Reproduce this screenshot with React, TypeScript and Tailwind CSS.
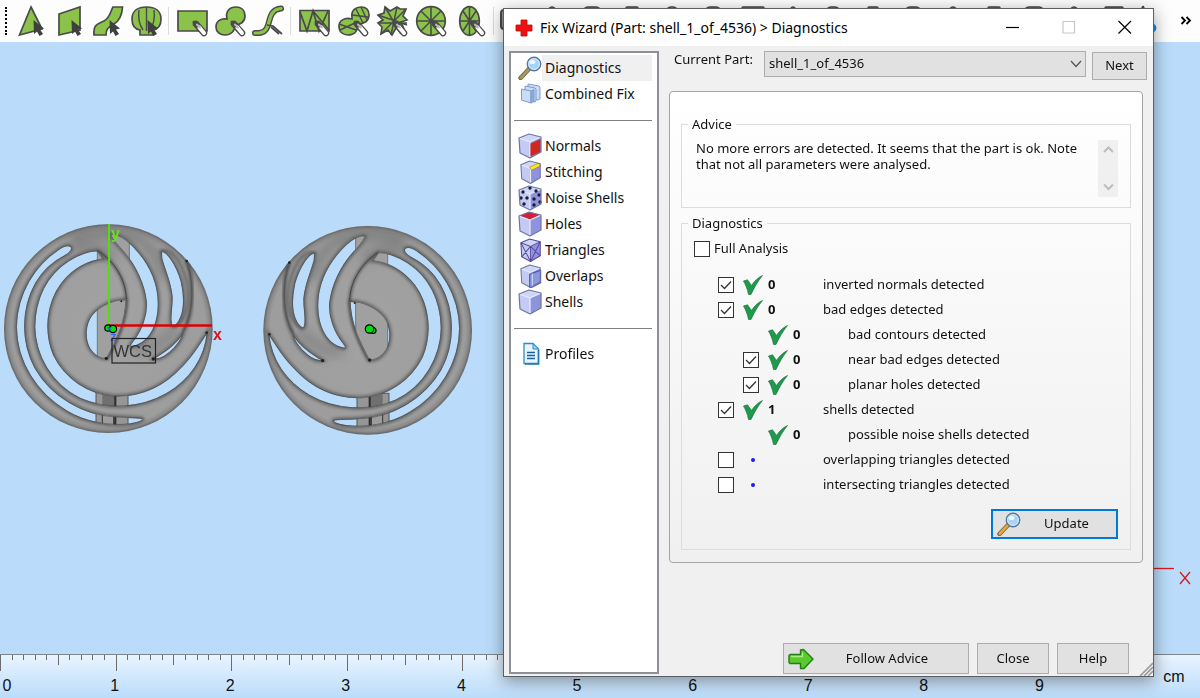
import { useState } from "react";
import type { ReactNode } from "react";

const GREEN = "#8bc34a";
const INK = "#4a4a4a";

/* ---------- toolbar ---------- */

function Cursor() {
  return (
    <path
      d="M20.500 20 L31 28.500 L27 29.500 L30 34 L26.500 36 L24 31.500 L21 34 Z"
      fill="#3f3f3f"
      stroke="none"
    />
  );
}

function Brush() {
  return (
    <g strokeLinecap="round">
      <path d="M23 24 L31 33" stroke={INK} strokeWidth="6.500" />
      <path d="M26 27 L31 33" stroke="#fff" strokeWidth="4" />
      <path d="M21 22 L25 26" stroke={INK} strokeWidth="3" />
      <path d="M24 24.500 L27 27.500" stroke="#bbb" strokeWidth="2" />
    </g>
  );
}

const toolGroups: { name: string; art: ReactNode }[][] = [
  [
    {
      name: "Mark triangle",
      art: (
        <>
          <path d="M18 7 L29 29 L6.500 35 Z" />
          <Cursor />
        </>
      ),
    },
    {
      name: "Mark plane",
      art: (
        <>
          <path d="M8 14 L29 7 V30 L8 35 Z" />
          <Cursor />
        </>
      ),
    },
    {
      name: "Mark surface",
      art: (
        <>
          <path d="M5 35 C4 24 9 24 15 21 C21 18 22 10 24 7 H33.500 C33 16 30 21 25 24 C18 28 17 30 17 35 Z" />
          <Cursor />
        </>
      ),
    },
    {
      name: "Mark shell",
      art: (
        <>
          <path d="M13 35 V30 C7 29 5 24 5 19 C5 11 11 7 19.500 7 C28 7 34 11 34 19 C34 24 32 29 26 30 V35 Z" />
          <path d="M19.500 7 V31 M12 10 C11 17 12 24 16 30 M27 10 C28 17 27 24 23 30" fill="none" strokeWidth="1.400" />
          <Cursor />
        </>
      ),
    },
  ],
  [
    {
      name: "Rectangle brush",
      art: (
        <>
          <path d="M5 11 H34 V31 H5 Z" />
          <Brush />
        </>
      ),
    },
    {
      name: "Blob brush",
      art: (
        <>
          <path d="M16 19 C14 11 19 7 25 7 C31 7 34 11 34 16 C34 22 29 25 24 25 C24 31 20 35 14 35 C9 35 5 32 5 27 C5 21 10 18 16 19 Z" />
          <Brush />
        </>
      ),
    },
    {
      name: "Curve brush",
      art: (
        <>
          <path d="M6 33 H10 C25 32 15 10 32 8.500" fill="none" strokeWidth="6" strokeLinecap="round" />
          <path d="M6 33 H10 C25 32 15 10 32 8.500" fill="none" stroke={GREEN} strokeWidth="3.200" strokeLinecap="round" />
          <path d="M18 25 L24 26 L33 34 M22 27 L30 34" fill="none" />
        </>
      ),
    },
  ],
  [
    {
      name: "Triangle strip",
      art: (
        <>
          <path d="M5 10.500 H34 V31 H5 Z" />
          <path d="M5 12 L12 31 L18 11 L24 31 L33 11 M18 11 L34 30" fill="none" />
          <Brush />
        </>
      ),
    },
    {
      name: "Split blob",
      art: (
        <>
          <path d="M18 17 C17 10 22 7 27 7 C32 7 35 10 35 15 C35 21 30 24 24 24 C24 31 20 35 14 35 C9 35 5 32 5 26 C5 21 10 17 18 19 Z" />
          <path d="M18 15 L34 17 M27 7 L33 20 M22 9 L29 23 M5 24 L22 30 M6 30 L23 22" fill="none" strokeWidth="1.400" />
          <Brush />
        </>
      ),
    },
    {
      name: "Star fan",
      art: (
        <>
          <path d="M12 7 L17 11 L24 7 L27 9 L33 9 L30 16 L34 20 L28 22 L31 29 L23 28 L19 35 L15 30 L8 34 L9 27 L5 23 L10 20 L5 15 L11 13 Z" />
          <path d="M12 7 L28 34 M33 9 L8 34 M5 15 L34 25 M24 7 L18 35 M5 23 H34" fill="none" strokeWidth="1.500" />
          <Brush />
        </>
      ),
    },
    {
      name: "Circle fan",
      art: (
        <>
          <circle cx="19" cy="21" r="14.300" />
          <path d="M19 7 V35 M5 21 H33 M9 11 L29 31 M29 11 L9 31" fill="none" strokeWidth="1.600" />
          <Brush />
        </>
      ),
    },
    {
      name: "Ellipse fan",
      art: (
        <>
          <ellipse cx="18.500" cy="21" rx="9.800" ry="14.300" />
          <path d="M18.500 7 V35 M9 21 H28 M12 11 L25 31 M25 11 L12 31" fill="none" strokeWidth="1.600" />
          <Brush />
        </>
      ),
    },
  ],
];

const moreTools = [8, 18, 12, 12, 16, 22, 6, 14, 10, 16, 8, 12, 20, 8, 18];

function ToolbarSeparator() {
  return <div className="ml-[3px] mr-1 h-7 w-px shrink-0 bg-[#dcdcdc]" />;
}

function Toolbar() {
  return (
    <div className="flex h-[42px] shrink-0 items-center overflow-hidden bg-[#fdfdfd]">
      <div className="ml-[5px] mr-[6px] h-7 w-0 border-l-2 border-dotted border-black" />
      {toolGroups.map((group, i) => (
        <div key={i} className={i === 2 ? "flex items-center gap-px" : "flex items-center"}>
          {group.map((tool) => (
            <button key={tool.name} type="button" aria-label={tool.name} className="h-[42px] w-[38px] shrink-0">
              <svg viewBox="0 0 38 42" className="h-[42px] w-[38px]" fill={GREEN} stroke={INK} strokeWidth="1.700">
                {tool.art}
              </svg>
            </button>
          ))}
          <ToolbarSeparator />
        </div>
      ))}
      <svg viewBox="0 0 38 42" className="h-[42px] w-[38px] shrink-0" aria-hidden="true">
        <rect x="3" y="10" width="28" height="19" rx="3" fill="#999" stroke={INK} strokeWidth="2" />
      </svg>
      <div className="flex min-w-0 flex-1 justify-between pl-1">
        {moreTools.map((size, i) => (
          <svg key={i} viewBox="0 0 24 42" className="h-[42px] w-6 shrink-0" fill={i === 14 ? "#1e88e5" : "#8a8a8a"} stroke={INK} strokeWidth="1.500" aria-hidden="true">
            <rect x={12 - size / 2} y="7" width={size} height="28" rx={i % 3 === 2 ? 1 : 5} />
          </svg>
        ))}
      </div>
      <svg viewBox="0 0 38 42" className="h-[42px] w-[38px] shrink-0" aria-hidden="true">
        <path d="M17 6 L4 32 M17 6 L27 28" stroke={INK} strokeWidth="1.600" fill="none" />
        <ellipse cx="23" cy="28" rx="6" ry="4" fill="#8cc4f2" stroke="#1e88e5" strokeWidth="3" />
      </svg>
      <button type="button" aria-label="More tools" className="ml-4 mr-2 shrink-0">
        <svg viewBox="0 0 12 10" className="h-[10px] w-3" fill="none" stroke="#000" strokeWidth="1.800">
          <path d="M1.500 1 L5 4.500 L1.500 8 M6.500 1 L10 4.500 L6.500 8" />
        </svg>
      </button>
    </div>
  );
}

/* ---------- scene ---------- */

const outerCrescent =
  "M213 95 C205 89 190 93 175 104 C105 150 50 235 49 335 C49 440 110 535 200 588 C255 622 330 634 390 627 C415 623 430 617 428 611 C415 606 385 609 345 605 C250 600 155 545 106 460 C62 380 65 280 107 205 C130 165 160 140 195 122 C210 113 219 104 213 95 Z";
const innerCrescent =
  "M292 108 C275 105 235 118 205 138 C140 180 105 250 104 335 C105 420 155 510 240 550 C320 585 420 582 500 536 C570 495 615 430 622 352 C600 382 585 415 545 455 C490 515 420 545 345 543 C265 538 195 490 161 420 C132 350 140 265 185 205 C220 160 265 138 310 132 Z";
const eye =
  "M378 254 C335 254 297 274 275 301 C255 328 252 372 270 402 C282 420 298 431 320 431 C345 380 376 330 378 254 Z";
const sail =
  "M332 58 C365 54 400 90 430 130 C462 175 480 230 474 290 C468 345 440 388 395 395 C388 392 392 388 400 377 C425 345 441 300 439 262 C433 205 405 150 372 112 C355 92 335 75 332 58 Z";
const blade =
  "M484 110 C500 106 530 150 544 200 C555 250 553 290 537 318 C528 332 519 338 515 330 C508 310 517 280 516 245 C512 200 492 160 485 130 Z";
const sliver = "M549 351 C535 380 505 405 460 431 C480 436 505 418 523 399 C538 382 548 368 549 351 Z";
const holes = [outerCrescent, innerCrescent, eye, sail, blade, sliver];
const holesPath = holes.join(" ");

function Disc({ id, flipped, postX }: { id: string; flipped?: boolean; postX: number }) {
  return (
    <svg viewBox="0 0 675 675" className="h-[225px] w-[225px]" aria-hidden="true">
      <defs>
        <radialGradient id={`${id}-metal`} gradientUnits="userSpaceOnUse" cx="325" cy="341" r="314">
          <stop offset="0" stopColor="#a3a3a3" />
          <stop offset="0.930" stopColor="#9d9d9d" />
          <stop offset="0.970" stopColor="#8a8a8a" />
          <stop offset="1" stopColor="#5d5d5d" />
        </radialGradient>
        <filter id={`${id}-soft`} x="-20%" y="-20%" width="140%" height="140%">
          <feGaussianBlur stdDeviation="5" />
        </filter>
        <filter id={`${id}-wide`} x="-50%" y="-50%" width="200%" height="200%">
          <feGaussianBlur stdDeviation="16" />
        </filter>
        <clipPath id={`${id}-holes`}>
          <path d={holesPath} />
        </clipPath>
        <clipPath id={`${id}-body`}>
          <circle cx="325" cy="341" r="314" />
        </clipPath>
      </defs>
      <g transform={flipped ? "translate(663 5) scale(-1 1)" : undefined}>
        <circle cx="325" cy="341" r="313" fill={`url(#${id}-metal)`} />
        <g clipPath={`url(#${id}-body)`} fill="none">
          <g filter={`url(#${id}-wide)`}>
            <path d="M210 75 C270 45 330 45 400 70" stroke="#6f6f6f" strokeWidth="34" opacity="0.700" />
            <path d="M395 60 C450 85 475 120 490 190" stroke="#777" strokeWidth="30" opacity="0.700" />
            <path d="M400 400 C450 410 490 385 530 340" stroke="#777" strokeWidth="34" opacity="0.600" />
            <path d="M220 105 C260 95 310 95 340 130" stroke="#6f6f6f" strokeWidth="26" opacity="0.700" />
          </g>
          <path d={holesPath} stroke="#666" strokeWidth="11" filter={`url(#${id}-soft)`} />
          <path d="M292 106 C345 140 378 195 379 254 C376 320 345 390 320 431" stroke="#4d4d4d" strokeWidth="7" filter={`url(#${id}-soft)`} />
          <path d="M560 138 C580 190 585 290 549 351" stroke="#484848" strokeWidth="9" filter={`url(#${id}-soft)`} />
          <path d="M482 112 C500 96 540 118 560 200 C572 260 560 320 519 336" stroke="#5d5d5d" strokeWidth="7" filter={`url(#${id}-soft)`} />
          <path d="M292 106 C345 140 378 195 379 254" stroke="#444" strokeWidth="3" />
          <path d="M560 138 C578 190 586 280 549 351" stroke="#555" strokeWidth="3" />
        </g>
        <path d={holesPath} fill="#badcfa" stroke="#555" strokeWidth="2.500" />
        <g clipPath={`url(#${id}-holes)`}>
          <rect x={postX} y="50" width="96" height="400" fill="#a0a0a0" stroke="#777" strokeWidth="3" />
          <rect x={postX - 4} y="530" width="96" height="100" fill="#969696" stroke="#555" strokeWidth="3" />
          <rect x={postX + 15} y="530" width="38" height="100" fill="#707070" />
          <rect x={postX + 15} y="575" width="34" height="60" fill="#9c9c9c" stroke="#333" strokeWidth="3" />
          <rect x={postX + 51} y="530" width="6" height="100" fill="#2c2c2c" />
          <path d={holesPath} fill="none" stroke="#444" strokeWidth="4" opacity="0.700" />
        </g>
        <g fill="#222">
          <circle cx="560" cy="138" r="4" />
          <circle cx="620" cy="353" r="4" />
          <circle cx="460" cy="432" r="5" />
          <circle cx="319" cy="430" r="5" />
          <circle cx="364" cy="259" r="3" />
        </g>
      </g>
    </svg>
  );
}

function Scene() {
  return (
    <div className="relative min-h-0 flex-1 overflow-hidden">
      <div className="absolute left-0 top-[173px]">
        <Disc id="front" postX={292} />
      </div>
      <div className="absolute left-[255px] top-[173px]">
        <Disc id="back" flipped postX={265} />
      </div>
      <svg className="absolute left-0 top-[173px] h-[225px] w-[480px]" viewBox="0 0 480 225" fontFamily="'Liberation Sans', sans-serif">
        <path d="M109 9 V111" stroke="#55dd11" strokeWidth="2" />
        <path d="M109 110.500 H212" stroke="#e00000" strokeWidth="2.500" />
        <text x="111" y="24" fontSize="16" fontWeight="bold" fill="#66e01c">y</text>
        <text x="213" y="125" fontSize="16" fontWeight="bold" fill="#d81818">x</text>
        <text x="110" y="126" fontSize="13" fill="#2b5cff">z</text>
        <rect x="112" y="123.500" width="43.500" height="24.500" fill="none" stroke="#222" strokeWidth="1.200" />
        <text x="113.500" y="141.500" fontSize="16.500" fill="#333">WCS</text>
        <g fill="#00e010" stroke="#000" strokeWidth="1.200">
          <circle cx="108" cy="113" r="3.200" />
          <circle cx="113" cy="114" r="3.600" />
          <circle cx="373" cy="115.500" r="3" />
          <circle cx="369.500" cy="114" r="4.200" />
        </g>
        <path d="M107 112 L111 115" stroke="#2b5cff" strokeWidth="1.600" />
      </svg>
      <svg className="absolute left-[1146px] top-[520px] h-6 w-12" viewBox="0 0 48 24" fill="none" stroke="#d61a1a">
        <path d="M0 6.500 H28" strokeWidth="1.300" />
        <path d="M34 10 L44 22 M44 10 L34 22" strokeWidth="1.300" />
      </svg>
    </div>
  );
}

/* ---------- ruler ---------- */

const UNIT = 115.6;
const ticks = Array.from({ length: 100 }, (_, i) => i);

function Ruler() {
  return (
    <div className="h-11 shrink-0 overflow-hidden border-t border-[#7d8790] bg-linear-to-b from-[#e9f4ff] to-[#badcfa]">
      <svg className="block h-11 w-full" fontFamily="'Liberation Sans', sans-serif" fontSize="16" fill="#111" textAnchor="middle">
        {ticks.map((i) => (
          <rect
            key={i}
            x={Math.round((i * UNIT) / 10)}
            y="0"
            width="1"
            height={i % 10 === 0 ? 16 : i % 5 === 0 ? 10 : 5}
            fill="#6c6c6c"
          />
        ))}
        {[0, 1, 2, 3, 4, 5, 6, 7, 8, 9].map((n) => (
          <text key={n} x={n === 0 ? 7 : n * UNIT - 1} y="36">
            {n}
          </text>
        ))}
        <text x="1174" y="27">cm</text>
      </svg>
    </div>
  );
}

/* ---------- dialog icons ---------- */

function Magnifier({ handle }: { handle: string }) {
  return (
    <svg viewBox="0 0 24 24" className="h-6 w-6" aria-hidden="true">
      <path d="M11 13 L2.500 22" stroke="#6b6440" strokeWidth="4.400" strokeLinecap="round" />
      <path d="M10.500 13.500 L2.800 21.700" stroke={handle} strokeWidth="2.800" strokeLinecap="round" />
      <circle cx="16" cy="8" r="6.700" fill="#a9d3f5" stroke="#55779f" strokeWidth="1.400" />
      <circle cx="16" cy="8" r="5.400" fill="none" stroke="#d9ecfb" strokeWidth="1" />
      <ellipse cx="14.500" cy="6" rx="3" ry="2" fill="#eef8ff" />
    </svg>
  );
}

type CubeKind = "normals" | "stitching" | "noise" | "holes" | "triangles" | "overlaps" | "shells";

const dots = [
  [12, 3], [5, 7], [18, 6], [3, 13], [9, 13], [6, 19], [16, 14], [21, 10], [16, 20], [22, 17],
];

function Cube({ kind }: { kind: CubeKind }) {
  const narrow = kind === "stitching" || kind === "overlaps" || kind === "triangles";
  return (
    <svg viewBox="0 0 24 26" className="h-[26px] w-6" aria-hidden="true" strokeLinejoin="round">
      <g transform={narrow ? "translate(2 1) scale(0.880 0.940)" : undefined}>
        <path d="M1 5 L11 1 L23 4 L12 9 Z" fill={kind === "holes" ? "#d32035" : "#cfd6f4"} />
        <path d="M1 5 L12 9 V25 L2 20 Z" fill="#c3caf4" />
        <path d="M12 9 L23 4 V19 L12 25 Z" fill="#8f93de" />
        <path d="M1 5 L12 9 L23 4 M12 9 V25" fill="none" stroke="#e8ebff" strokeWidth="1.200" />
        {kind === "normals" && <path d="M12.500 10.500 L22.500 6 V19 L12.500 23.500 Z" fill="#d0281f" />}
        {kind === "stitching" && <path d="M11 7.500 L21 3.500 L23 4.500 V6.500 L13 11 Z" fill="#ffe51f" stroke="#8a7b16" strokeWidth="0.600" />}
        {kind === "triangles" && (
          <path d="M1 5 L12 9 L23 4 M12 9 V25 M12 9 L2 20 M12 9 L23 19 M1 5 L12 25 M23 4 L12 25" fill="none" stroke="#57499c" strokeWidth="1.100" />
        )}
        {kind === "overlaps" && (
          <>
            <path d="M11 11 L23.500 6.500 V20 L13 25 H11 Z" fill="#8c97dd" stroke="#3d5fae" strokeWidth="1.200" />
            <path d="M14 10 V24.500" stroke="#dbe6ff" strokeWidth="1" />
          </>
        )}
        {kind === "noise" && (
          <g fill="#1b1b33">
            {dots.map(([x, y]) => (
              <circle key={`${x}-${y}`} cx={x} cy={y} r="1.700" />
            ))}
          </g>
        )}
        <path d="M1 5 L11 1 L23 4 V19 L12 25 L2 20 Z" fill="none" stroke={kind === "triangles" ? "#57499c" : "#6b76a8"} strokeWidth="1.200" />
      </g>
    </svg>
  );
}

function StackIcon() {
  return (
    <svg viewBox="0 0 24 26" className="h-[26px] w-6" aria-hidden="true" fill="#cbdcf7" stroke="#7f9bcb" strokeWidth="1">
      <path d="M10 3 L21 5 L22 6 V18 L20 19 L10 16 Z" />
      <path d="M7 5 L17 7 L18 8 V20 L17 21 L7 18 Z" />
      <path d="M3.500 8 L13 10 V22 L3.500 19 Z" />
      <path d="M13 10 L16 8.500 V20.500 L13 22 Z" fill="#8eabdd" />
    </svg>
  );
}

function PageIcon() {
  return (
    <svg viewBox="0 0 24 26" className="h-[26px] w-6" aria-hidden="true">
      <path d="M6 2.500 H15 L20.500 8 V22.500 H6 Z" fill="#e6f5fe" stroke="#2f8cc9" strokeWidth="1.300" />
      <path d="M7 23 H20.500 V9" fill="none" stroke="#1f7ab8" strokeWidth="1.600" />
      <path d="M15 2.500 V8 H20.500 Z" fill="#9fd2f2" stroke="#2f8cc9" />
      <path d="M9 11.500 H17 M9 14.500 H17 M9 17.500 H17" stroke="#1d5f9c" strokeWidth="1.500" />
    </svg>
  );
}

function GreenCheck() {
  return (
    <svg viewBox="0 0 20 20" className="h-5 w-5" aria-hidden="true">
      <path d="M0.500 6 L4.500 4.800 L8.500 10.500 C11 6.500 15 2.500 19.500 0.500 C15 6 11.500 12 8 19.500 L5.500 19.500 C4.500 14 2.500 9.500 0.500 6 Z" fill="#1d9a4a" stroke="#1f7541" strokeWidth="0.700" />
    </svg>
  );
}

/* ---------- dialog parts ---------- */

type NavItem = { label: string; icon: ReactNode };

const navGroups: NavItem[][] = [
  [
    { label: "Diagnostics", icon: <Magnifier handle="#a59a5b" /> },
    { label: "Combined Fix", icon: <StackIcon /> },
  ],
  [
    { label: "Normals", icon: <Cube kind="normals" /> },
    { label: "Stitching", icon: <Cube kind="stitching" /> },
    { label: "Noise Shells", icon: <Cube kind="noise" /> },
    { label: "Holes", icon: <Cube kind="holes" /> },
    { label: "Triangles", icon: <Cube kind="triangles" /> },
    { label: "Overlaps", icon: <Cube kind="overlaps" /> },
    { label: "Shells", icon: <Cube kind="shells" /> },
  ],
  [{ label: "Profiles", icon: <PageIcon /> }],
];

function Sidebar() {
  const [active, setActive] = useState("Diagnostics");
  return (
    <nav className="flex w-[150px] shrink-0 flex-col border-2 border-[#8b9099] bg-white pl-[3px] pr-[5px] pt-[2px] font-['Noto_Sans',sans-serif] text-[14px]">
      {navGroups.map((group, i) => (
        <div key={i}>
          {i > 0 && (
            <div className="flex h-[26px] items-center">
              <hr className="w-full border-[#808080]" />
            </div>
          )}
          {group.map((item) => (
            <button key={item.label} type="button" onClick={() => setActive(item.label)} className="flex h-[26px] w-full items-center pl-1 text-left">
              <span className="flex w-6 shrink-0 justify-center">{item.icon}</span>
              <span className={item.label === active ? "flex-1 bg-[#f0f0f0] pl-[3px] leading-[26px]" : "flex-1 pl-[3px] leading-[26px]"}>{item.label}</span>
            </button>
          ))}
        </div>
      ))}
    </nav>
  );
}

function Tick({ id, checked }: { id: string; checked?: boolean }) {
  return (
    <span className="grid h-4 w-4 shrink-0">
      <input id={id} type="checkbox" defaultChecked={checked} className="peer col-start-1 row-start-1 h-4 w-4 appearance-none border border-[#333] bg-white" />
      <svg viewBox="0 0 16 16" className="pointer-events-none invisible col-start-1 row-start-1 h-4 w-4 peer-checked:visible" fill="none" stroke="#333" strokeWidth="1.300">
        <path d="M3 8 L6.500 11.500 L13 4.500" />
      </svg>
    </span>
  );
}

type Row = { id: string; text: string; nested?: boolean; box?: boolean; checked?: boolean; count?: number };

const rows: Row[] = [
  { id: "inverted", text: "inverted normals detected", box: true, checked: true, count: 0 },
  { id: "edges", text: "bad edges detected", box: true, checked: true, count: 0 },
  { id: "contours", text: "bad contours detected", nested: true, count: 0 },
  { id: "near", text: "near bad edges detected", nested: true, box: true, checked: true, count: 0 },
  { id: "planar", text: "planar holes detected", nested: true, box: true, checked: true, count: 0 },
  { id: "shells", text: "shells detected", box: true, checked: true, count: 1 },
  { id: "noise", text: "possible noise shells detected", nested: true, count: 0 },
  { id: "overlapping", text: "overlapping triangles detected", box: true },
  { id: "intersecting", text: "intersecting triangles detected", box: true },
];

function DiagnosticRow({ row }: { row: Row }) {
  return (
    <li className={row.nested ? "flex h-[25px] items-center pl-[61px]" : "flex h-[25px] items-center pl-9"}>
      <span className="flex w-[25px] shrink-0">{row.box && <Tick id={row.id} checked={row.checked} />}</span>
      <span className="flex w-[25px] shrink-0">
        {row.count === undefined ? <span className="ml-2 h-1 w-1 rounded-full bg-[#1a1aff]" /> : <GreenCheck />}
      </span>
      <span className="w-[55px] shrink-0 font-bold">{row.count}</span>
      {row.box ? <label htmlFor={row.id}>{row.text}</label> : <span>{row.text}</span>}
    </li>
  );
}

const buttonClass = "flex h-[31px] items-center justify-center border border-[#adadad] bg-[#e1e1e1]";

function FixWizard() {
  return (
    <section
      role="dialog"
      aria-label="Fix Wizard"
      className="absolute left-[503px] top-2 flex w-[651px] flex-col border border-[#5a5f64] bg-[#f0f0f0] font-['Noto_Sans',sans-serif] text-[13px] text-[#111] shadow-[0_4px_16px_rgba(0,0,0,0.4)]"
    >
      <header className="flex h-[37px] items-center bg-white pl-[11px]">
        <svg viewBox="0 0 18 18" className="h-[18px] w-[18px]" aria-hidden="true">
          <path d="M6 1 H12 V6 H17 V12 H12 V17 H6 V12 H1 V6 H6 Z" fill="#f01010" stroke="#b80d0d" strokeWidth="0.800" strokeLinejoin="round" />
        </svg>
        <h1 className="ml-[7px] flex-1 text-[14px] text-black">Fix Wizard (Part: shell_1_of_4536) &gt; Diagnostics</h1>
        <div className="flex">
          {[
            ["Minimize", "M0 7.500 H13", "#000"],
            ["Maximize", "M1 1.500 H12.500 V13 H1 Z", "#c8c8c8"],
            ["Close window", "M0.500 1 L13 13.500 M13 1 L0.500 13.500", "#000"],
          ].map(([name, d, color]) => (
            <button key={name} type="button" aria-label={name} className="flex h-[34px] w-14 items-center justify-center">
              <svg viewBox="0 0 14 15" className="h-[15px] w-[14px]" fill="none" stroke={color} strokeWidth="1.200">
                <path d={d} />
              </svg>
            </button>
          ))}
        </div>
      </header>

      <div className="flex pb-[2px] pl-[5px] pt-[5px]">
        <Sidebar />
        <div className="flex min-w-0 flex-1 flex-col pl-[10px] pr-[6px]">
          <div className="flex items-start">
            <label htmlFor="part" className="w-[95px] shrink-0 pl-[5px] leading-4">
              Current Part:
            </label>
            <div className="grid flex-1 items-center">
              <select id="part" className="col-start-1 row-start-1 h-[26px] w-full appearance-none border border-[#adadad] bg-[#e1e1e1] pl-1">
                <option>shell_1_of_4536</option>
              </select>
              <svg viewBox="0 0 12 8" className="pointer-events-none col-start-1 row-start-1 mr-1 h-2 w-3 justify-self-end" fill="none" stroke="#555" strokeWidth="1.300">
                <path d="M1 1 L6 6.500 L11 1" />
              </svg>
            </div>
            <button type="button" className="ml-[6px] mt-px flex h-7 w-[55px] items-center justify-center border border-[#adadad] bg-[#e1e1e1]">
              Next
            </button>
          </div>

          <div className="mr-1 mt-[11px] flex flex-col rounded-[4px] border border-[#a5a5a5] bg-linear-to-b from-white to-[#f0f0f0] px-[11px] pb-3 pt-6">
            <fieldset className="min-w-0 border border-[#dcdcdc] pb-2 pr-3">
              <legend className="ml-[6px] px-1 leading-4">Advice</legend>
              <div className="flex items-start pl-[14px] pt-2">
                <p className="h-[59px] flex-1 pr-4 leading-4">
                  No more errors are detected. It seems that the part is ok. Note that not all parameters were analysed.
                </p>
                <div className="flex h-[57px] w-5 shrink-0 flex-col items-center justify-between bg-[#f0f0f0] py-[6px]">
                  {[
                    ["Scroll up", "M1 6 L5.500 1.500 L10 6"],
                    ["Scroll down", "M1 1.500 L5.500 6 L10 1.500"],
                  ].map(([name, d]) => (
                    <button key={name} type="button" aria-label={name}>
                      <svg viewBox="0 0 11 8" className="h-2 w-[11px]" fill="none" stroke="#bdbdbd" strokeWidth="2">
                        <path d={d} />
                      </svg>
                    </button>
                  ))}
                </div>
              </div>
            </fieldset>

            <fieldset className="mt-[7px] min-w-0 border border-[#dcdcdc] pb-[10px] pr-3">
              <legend className="ml-[6px] px-1 leading-4">Diagnostics</legend>
              <div className="mt-[9px] flex h-[18px] items-center gap-1 pl-3">
                <Tick id="full" />
                <label htmlFor="full">Full Analysis</label>
              </div>
              <ul className="mt-[14px]">
                {rows.map((row) => (
                  <DiagnosticRow key={row.id} row={row} />
                ))}
              </ul>
              <button type="button" className="ml-auto mt-3 flex h-[30px] w-[127px] items-center border-2 border-[#0078d7] bg-[#e1e1e1] pl-1">
                <Magnifier handle="#e5a83c" />
                <span className="flex-1 pr-1 text-center">Update</span>
              </button>
            </fieldset>
          </div>

          <div className="mr-[18px] mt-20 flex justify-end gap-2">
            <button type="button" className={`${buttonClass} w-[186px] pl-1`}>
              <svg viewBox="0 0 26 22" className="h-[22px] w-[26px]" aria-hidden="true">
                <path d="M2 6.500 H12.500 V2 L15.500 1.500 L25 11 L16 20.500 H12.500 V15.500 H2 L1 14.500 V7.500 Z" fill="#58cc2e" stroke="#267a18" strokeWidth="1.400" strokeLinejoin="round" />
                <path d="M3 8.500 H14.500 V4.500" fill="none" stroke="#a9f07f" strokeWidth="1.300" />
              </svg>
              <span className="flex-1 pr-2 text-center">Follow Advice</span>
            </button>
            <button type="button" className={`${buttonClass} w-[72px]`}>
              Close
            </button>
            <button type="button" className={`${buttonClass} w-[72px]`}>
              Help
            </button>
          </div>
        </div>
      </div>
      <svg viewBox="0 0 14 14" className="absolute bottom-0 right-0 h-[14px] w-[14px]" stroke="#9b9b9b" strokeWidth="1.600" aria-hidden="true">
        <path d="M1 14 L14 1 M5 14 L14 5 M9 14 L14 9" />
      </svg>
    </section>
  );
}

export default function App() {
  return (
    <main className="relative flex h-screen flex-col overflow-hidden bg-[#badcfa]">
      <Toolbar />
      <Scene />
      <Ruler />
      <FixWizard />
    </main>
  );
}
